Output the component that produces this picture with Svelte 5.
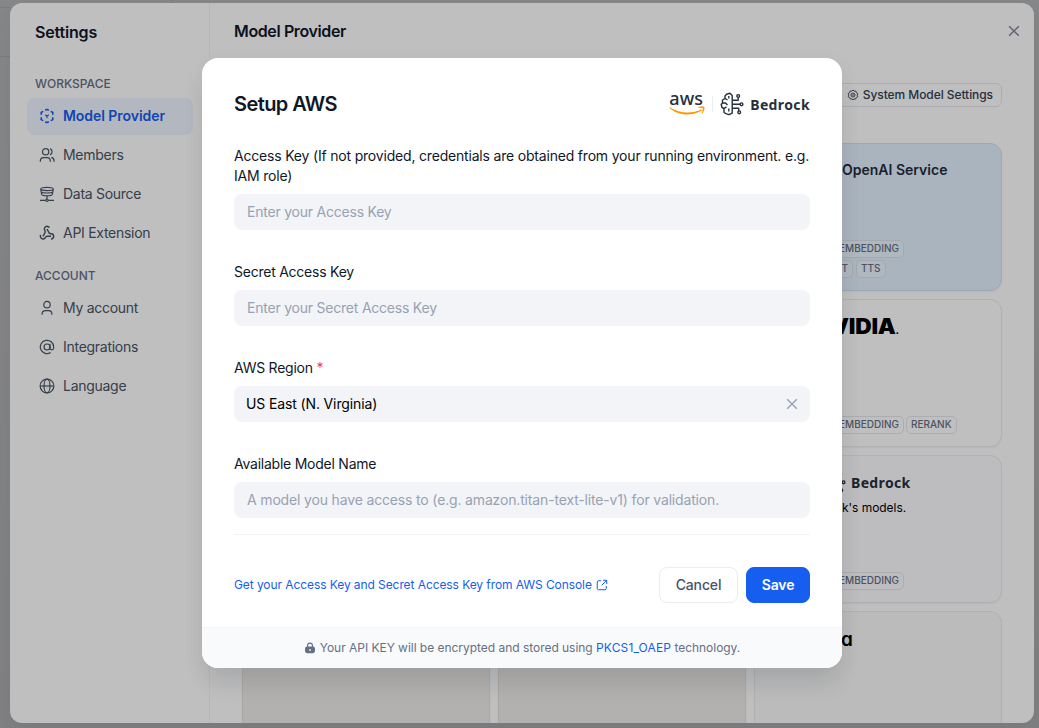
<script>
  const workspace = [
    { label: 'Model Provider', icon: 'cube', active: true },
    { label: 'Members', icon: 'members' },
    { label: 'Data Source', icon: 'data' },
    { label: 'API Extension', icon: 'webhook' }
  ];
  const account = [
    { label: 'My account', icon: 'user' },
    { label: 'Integrations', icon: 'at' },
    { label: 'Language', icon: 'globe' }
  ];
</script>

{#snippet icon(name)}
  <svg class="ico" viewBox="0 0 24 24" fill="none" stroke="currentColor" stroke-width="1.8">
    {#if name === 'cube'}
      <path d="M10 3 12 2l2 1M18.500 5.500l2.200 1.300v2.400M20.700 14.800v2.400l-2.200 1.300M14 21l-2 1-2-1M5.500 18.500l-2.200-1.300v-2.400M3.300 9.200V6.800l2.200-1.300" stroke-width="2.300" stroke-linecap="round" stroke-linejoin="round" />
      <path d="m10 10.800 2 1.200 2-1.200M12 12v2.300" stroke-width="2" stroke-linecap="round" />
    {:else if name === 'members'}
      <circle cx="10" cy="7" r="4.700" />
      <path d="M2 22v-1a5 5 0 0 1 5-5h5a5 5 0 0 1 5 5v1M16.500 2.500a5 5 0 0 1 0 9.300M18.500 15.500a5 5 0 0 1 4 5V22" />
    {:else if name === 'data'}
      <path d="M2.500 4.500c0-3.200 19-3.200 19 0s-19 3.200-19 0L4 12.500c1 3 15 3 16 0l1.500-8M3.300 9c2.500 2 14.900 2 17.400 0M12 15v5M1.500 21.500H10M14 21.500h8.500" />
      <circle cx="12" cy="21.300" r="1.800" />
    {:else if name === 'webhook'}
      <g stroke-width="2.200">
        <path d="M18 17h-6c-1.100 0-1.950.940-2.480 1.900A4 4 0 0 1 2 17c.010-.7.200-1.400.570-2" />
        <path d="m6 17 3.130-5.780c.530-.970.100-2.180-.5-3.100a4 4 0 1 1 6.890-4.060" />
        <path d="m12 6 3.130 5.730C15.660 12.700 16.900 13 18 13a4 4 0 0 1 0 8" />
      </g>
    {:else if name === 'user'}
      <circle cx="12" cy="7" r="4.800" />
      <path d="M4.700 22v-1a5 5 0 0 1 5-5h4.600a5 5 0 0 1 5 5v1" />
    {:else if name === 'at'}
      <circle cx="12" cy="12" r="4.500" />
      <path d="M16.500 7v6.500a2.700 2.700 0 0 0 5.500 0V12a10 10 0 1 0-4.500 8.300" />
    {:else if name === 'globe'}
      <circle cx="12" cy="12" r="10.300" /><ellipse cx="12" cy="12" rx="4.500" ry="10.300" /><path d="M2 12h20" />
    {:else if name === 'gear'}
      <path d="m12 2 2.500 2.300 3.400-.2.900 3.300 2.900 1.800-1.300 3.100 1.200 3.200-3 1.500-1.200 3.100-3.300-.4L12 22l-2.100-2.300-3.300.4-1.200-3.100-3-1.500 1.200-3.200-1.300-3.100 2.900-1.800.9-3.300 3.400.2Z" stroke-linejoin="round" />
      <circle cx="12" cy="12" r="4" /><circle cx="12" cy="12" r=".8" />
    {:else if name === 'close'}
      <path d="m4.700 4.700 14.600 14.600M19.300 4.700 4.700 19.300" stroke-width="2.100" />
    {:else if name === 'external'}
      <path d="M10 3.500H5a2.500 2.500 0 0 0-2.500 2.500v13A2.500 2.500 0 0 0 5 21.500h13a2.500 2.500 0 0 0 2.500-2.500v-5M14 2.500h7.500V10M21 3l-9.500 9.500" stroke-width="2" />
    {/if}
  </svg>
{/snippet}

{#snippet brain()}
  <svg class="brain" viewBox="0 0 24 24" fill="none" stroke="#252f3e" stroke-width="1.400" stroke-linejoin="round">
    <path d="M12.200 3.500 10 1.300 6.500 2.200 5 4v2.500L2.500 8v3L1.200 12.500 2 15.500l2 1v4l2.500 1.300L9 22.700l3.200-1.500Z" />
    <path d="M5 6.500 7.500 8M4 16.500l2.500-1.700M2.500 11h3L7.500 13M8.800 4V6.500M8.800 19.500v-3M12.200 8.200h6V5.500M12.200 12.300h8M12.200 16.300h6.500V19" />
    <circle cx="18.200" cy="4" r="1.400" /><circle cx="21.500" cy="12.300" r="1.400" /><circle cx="19.200" cy="20.300" r="1.400" />
  </svg>
{/snippet}

{#snippet tags(list)}
  <div class="tags">{#each list as tag}<span class:wide={tag === 'EMBEDDING'} class:speech={tag === 'T'}>{tag}</span>{/each}</div>
{/snippet}

<div class="screen">
  <div class="settings">
    <aside>
      <h1>Settings</h1>
      <h2>WORKSPACE</h2>
      <nav>
        {#each workspace as item}
          <div class="item" class:active={item.active}>{@render icon(item.icon)}{item.label}</div>
        {/each}
      </nav>
      <h2 class="second">ACCOUNT</h2>
      <nav>
        {#each account as item}
          <div class="item">{@render icon(item.icon)}{item.label}</div>
        {/each}
      </nav>
    </aside>
    <main>
      <header><span>Model Provider</span><i>{@render icon('close')}</i></header>
      <div class="toolbar"><div class="system">{@render icon('gear')}<span>System Model Settings</span></div></div>
      <div class="grid">
        <div class="card"></div><div class="card"></div>
        <div class="card azure">
          <b class="service">OpenAI Service</b>
          <div class="foot">{@render tags(['EMBEDDING'])}{@render tags(['T', 'TTS'])}</div>
        </div>
        <div class="card"></div><div class="card"></div>
        <div class="card">
          <b class="nvidia">VIDIA<small>.</small></b>
          <div class="foot">{@render tags(['EMBEDDING', 'RERANK'])}</div>
        </div>
        <div class="card"></div><div class="card"></div>
        <div class="card cool">
          <div class="bedrock">{@render brain()}<span>Bedrock</span></div>
          <p>k's models.</p>
          <div class="foot">{@render tags(['EMBEDDING'])}</div>
        </div>
        <div class="card warm"></div><div class="card warm"></div>
        <div class="card gray"><b class="last">a</b></div>
      </div>
    </main>
  </div>

  <div class="overlay">
    <section class="modal">
      <div class="body">
        <div class="head">
          <h3>Setup AWS</h3>
          <div class="brand">
            <div class="aws">
              <span>aws</span>
              <svg viewBox="0 0 36 10"><path d="M.5 1.200C11 7.800 23 7.900 32.500 3.200l.8 1.100C23 10.600 9 10.100.2 1.800Z" /><path d="M29.200 1.100c2-.9 5.200-1 6.200-.2.500 1.900-.6 5-2.200 6.500l-.5-.3c.6-1.500 1.500-4 1.100-4.800-.8-.6-3-.5-4.600-.6Z" /></svg>
            </div>
            <i class="line"></i>
            {@render brain()}
            <b>Bedrock</b>
          </div>
        </div>
        <div class="field">
          <div class="label first">Access Key (If not provided, credentials are obtained from your running environment. e.g. IAM role)</div>
          <div class="input">Enter your Access Key</div>
        </div>
        <div class="field">
          <div class="label">Secret Access Key</div>
          <div class="input">Enter your Secret Access Key</div>
        </div>
        <div class="field">
          <div class="label">AWS Region <em>*</em></div>
          <div class="input select"><span>US East (N. Virginia)</span>{@render icon('close')}</div>
        </div>
        <div class="field">
          <div class="label">Available Model Name</div>
          <div class="input model">A model you have access to (e.g. amazon.titan-text-lite-v1) for validation.</div>
        </div>
        <div class="actions">
          <div class="link"><span>Get your Access Key and Secret Access Key from AWS Console</span>{@render icon('external')}</div>
          <button>Cancel</button><button class="save">Save</button>
        </div>
      </div>
      <footer>
        <svg viewBox="0 0 12 12"><path fill-rule="evenodd" fill="#667085" d="M3 4.500V3.600a3 3 0 0 1 6 0v.9c1.300.2 2 .9 2 2.200v2c0 1.600-.9 2.500-2.500 2.500h-5C1.900 11.200 1 10.300 1 8.700v-2c0-1.300.7-2 2-2.200Zm1.100-.1h3.800v-.8a1.900 1.900 0 0 0-3.800 0ZM6 6.900a.8.800 0 0 0-.8.8v.6a.8.800 0 0 0 1.600 0v-.6a.8.800 0 0 0-.8-.8Z" /></svg>
        <span>Your API KEY will be encrypted and stored using <b>PKCS1_OAEP</b> technology.</span>
      </footer>
    </section>
  </div>
</div>

<style>
  :global(body) { margin: 0; font-family: Inter, sans-serif; }
  * { box-sizing: border-box; }
  .screen {
    position: relative; width: 1039px; height: 728px; padding: 3px 5px 5px 10px; overflow: hidden;
    background:
      linear-gradient(#a5a6a8, #a5a6a8) 0 7px / 10px 1px no-repeat,
      linear-gradient(#a5a6a8, #a5a6a8) 0 56px / 10px 1px no-repeat,
      linear-gradient(#a5a6a8, #a5a6a8) 171px 0 / 1px 3px no-repeat,
      linear-gradient(#b3b4b7, #abacaf);
  }
  .settings { display: flex; width: 1024px; height: 720px; background: #fff; border-radius: 12px; overflow: hidden; box-shadow: 0 8px 20px rgba(16, 24, 40, .06); }
  .ico { display: block; width: 16px; height: 16px; flex: none; }
  aside { width: 200px; flex: none; border-right: 1px solid #f2f4f7; padding: 17px 16px 0 17px; }
  h1, h2, h3, p { margin: 0; }
  h1 { padding-left: 8px; font-size: 16px; line-height: 24px; font-weight: 600; color: #101828; letter-spacing: -.18px; }
  h2 { margin-top: 31px; padding-left: 8px; font-size: 12px; line-height: 18px; font-weight: 500; color: #667085; }
  h2.second { margin-top: 15px; }
  nav { display: flex; flex-direction: column; gap: 2px; margin-top: 5px; }
  .item { display: flex; align-items: center; gap: 8px; height: 37px; padding: 0 0 2px 12px; border-radius: 8px; color: #475467; font-size: 14px; letter-spacing: -.28px; }
  .active { background: #eff4ff; color: #155eef; font-weight: 600; letter-spacing: -.05px; }
  main { width: 824px; padding: 0 32px; }
  header { display: flex; align-items: center; justify-content: space-between; height: 56px; margin: 0 -20px 0 -8px; font-size: 16px; font-weight: 600; color: #101828; letter-spacing: -.38px; }
  header .ico { color: #7c8799; }
  .toolbar { display: flex; justify-content: flex-end; padding-top: 24px; height: 84px; }
  .system { display: flex; align-items: center; gap: 4px; height: 24px; padding: 0 8px; border: 1px solid #e4e7ec; border-radius: 6px; font-size: 12px; font-weight: 500; color: #354052; letter-spacing: -.07px; }
  .system span { padding-bottom: 1px; }
  .system .ico { width: 12px; height: 12px; }
  .grid { display: grid; grid-template-columns: repeat(3, 248px); grid-auto-rows: 148px; gap: 8px; }
  .card { display: flex; flex-direction: column; border: 1px solid #eaecf0; border-radius: 12px; padding: 16px; background: #fff; box-shadow: 0 1px 2px rgba(16, 24, 40, .05); }
  .azure { background: #e3f0ff; border-color: #d1e0f5; }
  .cool { background: #fcfcff; }
  .warm { background: #efedea; border-color: #e0e0de; }
  .gray { background: #fafafa; }
  .service { padding-left: 71px; font-size: 14px; line-height: 20px; font-weight: 600; color: #1f2d3d; white-space: nowrap; }
  .foot { display: flex; flex-direction: column; gap: 2px; margin-top: auto; margin-bottom: -4px; }
  .tags { display: flex; gap: 3px; }
  .tags span { height: 18px; padding: 0 4px; border: 1px solid #e4e7ec; border-radius: 5px; font-size: 10px; line-height: 15px; font-weight: 500; color: #667085; text-align: right; }
  .tags .wide { width: 133px; }
  .tags .wide + span { margin-left: -1px; }
  .tags .speech { width: 82px; }
  .azure .tags span { background: rgba(255, 255, 255, .25); border-color: #dde2ea; }
  .nvidia { width: 128px; padding-top: 1px; font: 900 21px/20px Inter, sans-serif; color: #000; text-align: right; letter-spacing: -.2px; transform: scaleX(1.08); transform-origin: right; }
  .nvidia small { font-size: 10px; font-weight: 700; }
  .bedrock { display: flex; align-items: center; gap: 5px; padding-left: 51px; height: 20px; font: 700 14px "Noto Sans", sans-serif; color: #252f3e; letter-spacing: .35px; }
  p { margin-top: 7px; padding-left: 71px; font-size: 12px; line-height: 18px; letter-spacing: -.05px; }
  .last { margin: 0 0 0 70px; font: 600 19px/24px Inter, sans-serif; font-feature-settings: "cv11"; }
  .brain { width: 24px; height: 24px; flex: none; }

  .overlay { position: absolute; inset: 0; display: flex; align-items: flex-start; padding: 58px 0 0 202px; background: rgba(0, 0, 0, .25); }
  .modal { width: 640px; height: 610px; border-radius: 16px; background: #fff; overflow: hidden; box-shadow: 0 20px 24px -4px rgba(16, 24, 40, .08), 0 8px 24px rgba(16, 24, 40, .05); }
  .body { height: 569px; padding: 32px 32px 0; }
  .head { display: flex; align-items: center; justify-content: space-between; height: 28px; margin-bottom: 28px; }
  h3 { font-size: 20px; line-height: 28px; font-weight: 600; color: #101828; letter-spacing: -.58px; }
  .brand { display: flex; align-items: center; color: #252f3e; }
  .brand b { margin-left: 6px; padding-top: 1px; font: 700 14px/20px "Noto Sans", sans-serif; letter-spacing: .38px; }
  .aws { width: 36px; height: 24px; }
  .aws span { display: block; height: 14px; font: 500 18px/13px "Noto Sans", sans-serif; letter-spacing: .15px; }
  .aws svg { display: block; width: 36px; height: 10px; fill: #f90; }
  .line { width: 1px; height: 16px; margin: 0 7px; background: #eaecf0; }
  .field { margin-bottom: 32px; }
  .label { margin-bottom: 8px; font-size: 14px; line-height: 20px; color: #101828; letter-spacing: -.24px; }
  .first { letter-spacing: -.19px; }
  .label em { color: #f04438; font-style: normal; }
  .input { display: flex; align-items: center; height: 36px; padding: 0 13px 2px; border-radius: 8px; background: #f2f4f7; color: #98a2b3; font-size: 14px; letter-spacing: -.22px; }
  .model { letter-spacing: -.16px; }
  .select { justify-content: space-between; padding: 0 10px 0 12px; color: #000; letter-spacing: -.13px; }
  .select span { padding-bottom: 2px; }
  .select .ico { color: #98a2b3; }
  .actions { display: flex; align-items: flex-start; margin-top: -16px; padding-top: 32px; border-top: 1px solid #f2f4f7; }
  .link { display: flex; align-items: center; gap: 4px; height: 35px; margin-right: auto; color: #155eef; font-size: 12px; letter-spacing: -.08px; }
  .link .ico { width: 12px; height: 12px; }
  button { width: 79px; height: 36px; margin-left: 8px; padding: 0 0 2px; border: 1px solid #eaecf0; border-radius: 8px; background: #fff; color: #475467; font: 500 14px Inter, sans-serif; letter-spacing: -.15px; }
  .save { width: 64px; background: #155eef; border-color: #155eef; color: #fff; font-weight: 600; }
  footer { display: flex; align-items: center; justify-content: center; gap: 4px; height: 41px; border-top: 1px solid #f2f4f7; background: #f9fafb; color: #667085; font-size: 12px; letter-spacing: -.03px; }
  footer span { padding-bottom: 2px; }
  footer svg { width: 12px; height: 12px; }
  footer b { color: #155eef; font-weight: 400; letter-spacing: .14px; }
</style>
